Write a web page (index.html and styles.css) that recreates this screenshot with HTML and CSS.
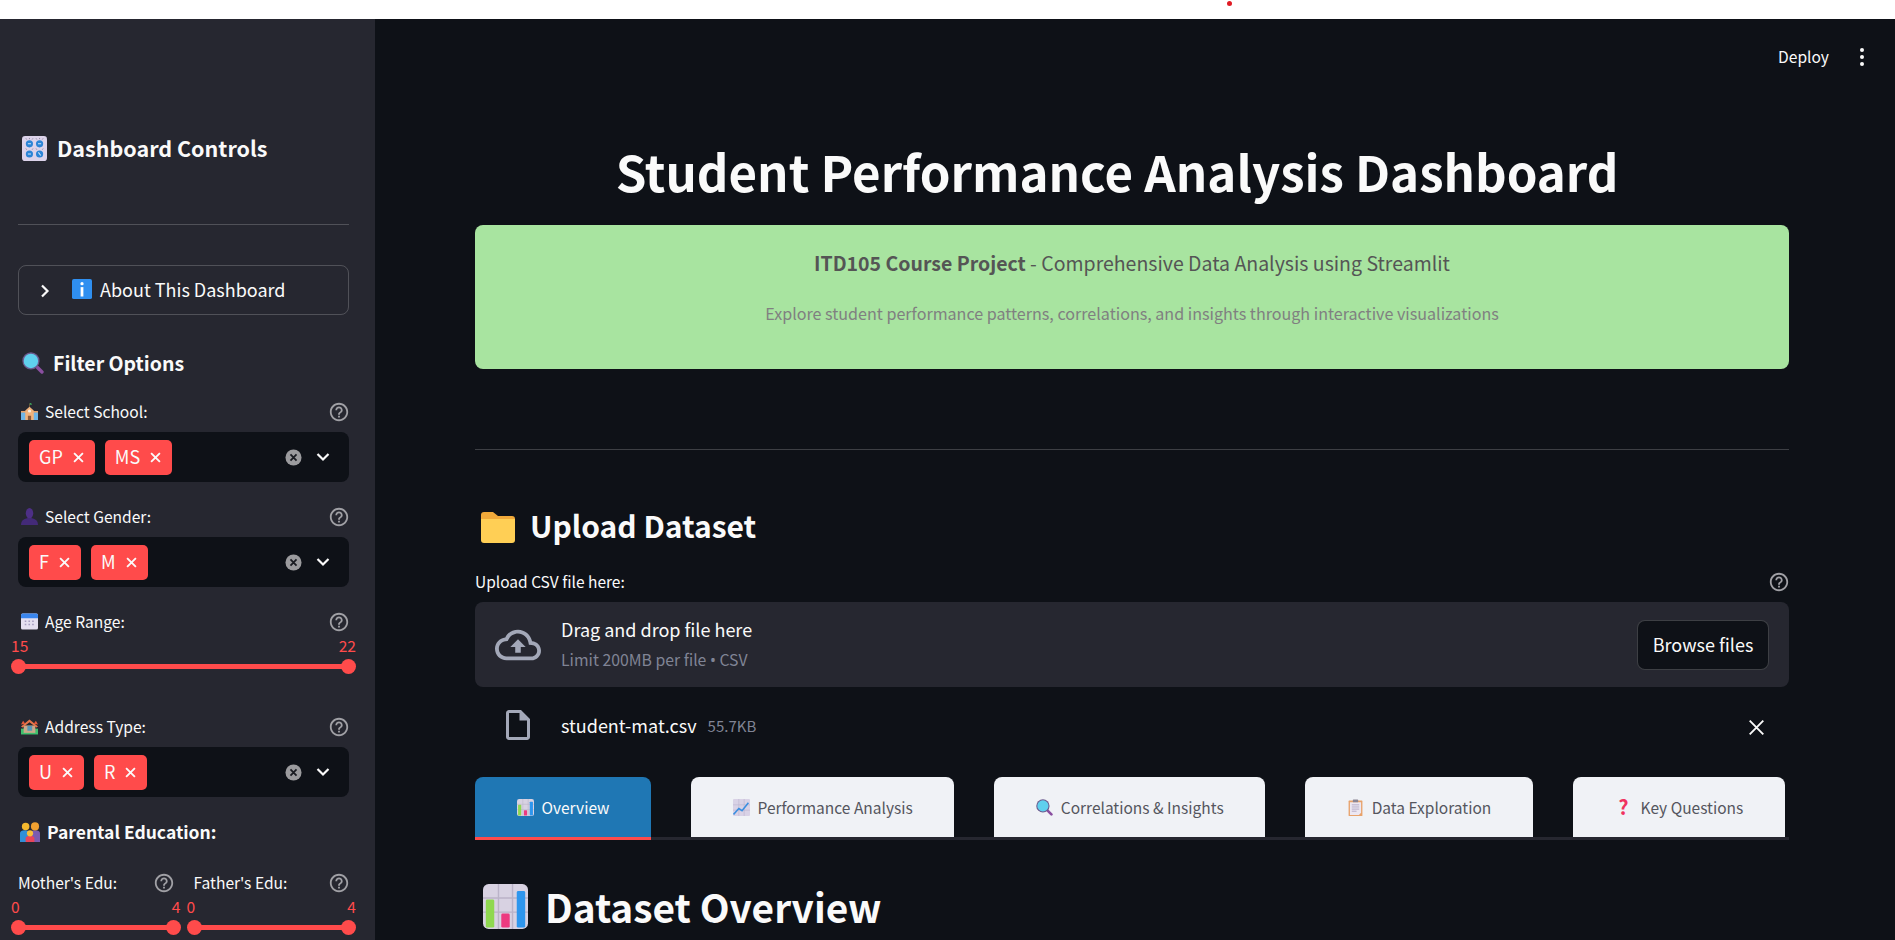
FILE: index.html
```html
<!DOCTYPE html>
<html lang="en">
<head>
  <meta charset="UTF-8">
  <title>Student Performance Analysis Dashboard</title>
  <link rel="stylesheet" href="styles.css">
</head>
<body>

  <!-- emoji and icon set, used through <use> below -->
  <svg class="defs" width="0" height="0">
    <symbol id="e-knobs" viewBox="0 0 32 32">
      <rect x="0" y="0" width="32" height="32" rx="4" fill="#dcd3ea"/>
      <circle cx="9.500" cy="10" r="4.600" fill="#2b84d6"/><circle cx="22.500" cy="10" r="4.600" fill="#2b84d6"/>
      <circle cx="9.500" cy="23" r="4.600" fill="#2b84d6"/><circle cx="22.500" cy="23" r="4.600" fill="#2b84d6"/>
      <path d="M7.500 10h4M20.500 10h4M7.500 23h4M21 21l3 4" stroke="#cfe4f7" stroke-width="1.400"/>
      <path d="M5 3l1 1.500M9.500 2.500v1.500M14 3l-1 1.500M18 3l1 1.500M22.500 2.500v1.500M27 3l-1 1.500M5 16l1 1.500M14 16l-1 1.500M18 16l1 1.500M27 16l-1 1.500" stroke="#7c7592" stroke-width="1"/>
    </symbol>
    <symbol id="e-info" viewBox="0 0 32 32">
      <rect x="0" y="0" width="32" height="32" rx="3" fill="#2f8ff0"/>
      <circle cx="16" cy="7.500" r="2.600" fill="#fff"/>
      <rect x="13.800" y="13" width="4.400" height="15" fill="#fff"/>
    </symbol>
    <symbol id="e-glass" viewBox="0 0 32 32">
      <path d="M20 20l9 9" stroke="#8a4fa0" stroke-width="5" stroke-linecap="round"/>
      <circle cx="13" cy="13" r="12.500" fill="#6b5a8e"/>
      <circle cx="13" cy="13" r="10.500" fill="#5fd0ee"/>
    </symbol>
    <symbol id="e-school" viewBox="0 0 32 32">
      <path d="M16 1v7" stroke="#7a5a3a" stroke-width="1.500"/>
      <path d="M16.500 0c3 0 4 1 4 3.500h-4z" fill="#3fa45a"/>
      <rect x="0" y="17" width="32" height="15" fill="#6fb6e8"/>
      <rect x="0" y="15" width="32" height="3" fill="#e8a36a"/>
      <path d="M8 32V14l8-7 8 7v18z" fill="#f0b27c"/>
      <circle cx="16" cy="15" r="3" fill="#f5efe6"/>
      <rect x="13" y="24" width="6" height="8" fill="#8a5a3c"/>
    </symbol>
    <symbol id="e-bust" viewBox="0 0 32 32">
      <ellipse cx="16" cy="10" rx="7" ry="10" fill="#4d2f86"/>
      <path d="M0 32c0-9 7-13 16-13s16 4 16 13z" fill="#432a78"/>
    </symbol>
    <symbol id="e-calendar" viewBox="0 0 32 32">
      <rect x="0" y="1" width="32" height="30" rx="3" fill="#e4dff0"/>
      <path d="M0 10V4a3 3 0 013-3h26a3 3 0 013 3v6z" fill="#3a86ee"/>
      <path d="M7 14h3v3H7zM14 14h3v3h-3zM21 14h3v3h-3zM7 20h3v3H7zM14 20h3v3h-3zM21 20h3v3h-3z" fill="#a59cc0"/>
    </symbol>
    <symbol id="e-house" viewBox="0 0 32 32">
      <rect x="0" y="20" width="32" height="11" fill="#3fc06e"/>
      <path d="M5 28V14h22v14z" fill="#c9a98a"/>
      <path d="M0 16L16 3l16 13-3 2L16 8 3 18z" fill="#e8764a"/>
      <path d="M0 12l4-7 4 6zM32 12l-4-7-4 6z" fill="#e65a3c"/>
      <rect x="12" y="15" width="9" height="9" fill="#5a97b5"/>
    </symbol>
    <symbol id="e-family" viewBox="0 0 32 32">
      <path d="M0 32V18c0-3 3-5 8-5s7 2 7 5v14z" fill="#2f8fd8"/>
      <path d="M16 32V18c0-3 3-5 8-5s8 2 8 5v14z" fill="#7a5bb0"/>
      <circle cx="9" cy="7" r="6" fill="#f5b92e"/>
      <circle cx="24" cy="7" r="6.500" fill="#f0a030"/>
      <path d="M9 32v-6c0-2 3-4 7-4s7 2 7 4v6z" fill="#e8455a"/>
      <circle cx="16" cy="18" r="5" fill="#f7bd3a"/>
    </symbol>
    <symbol id="e-folder" viewBox="0 0 36 33">
      <path d="M1 5a3 3 0 013-3h9l5 4h14a3 3 0 013 3v6H1z" fill="#f0a93a"/>
      <path d="M1 9h34v21a3 3 0 01-3 3H4a3 3 0 01-3-3z" fill="#ffcf55"/>
    </symbol>
    <symbol id="e-bars" viewBox="0 0 32 32">
      <rect x="0" y="0" width="32" height="32" rx="4" fill="#d8d2e2"/>
      <path d="M0 10h32M0 20h32M11 0v32M21 0v32" stroke="#bab3c8" stroke-width="1"/>
      <rect x="2" y="11" width="6" height="20" rx="1" fill="#8fd850"/>
      <rect x="13" y="21" width="6" height="10" rx="1" fill="#ec3a80"/>
      <rect x="24" y="5" width="6" height="26" rx="1" fill="#2e96ee"/>
    </symbol>
    <symbol id="e-trend" viewBox="0 0 32 32">
      <rect x="0" y="0" width="32" height="32" rx="2" fill="#d9d2e6"/>
      <path d="M0 11h32M0 21h32M11 0v32M21 0v32" stroke="#b8b0ca" stroke-width="1"/>
      <path d="M1 29l10-11 6 4 12-15" fill="none" stroke="#3c8fe0" stroke-width="3"/>
    </symbol>
    <symbol id="e-clip" viewBox="0 0 28 32">
      <rect x="1" y="3" width="26" height="29" rx="1" fill="#e8a26a"/>
      <path d="M3.500 6h21v20l-4 4h-17z" fill="#ece7f2"/>
      <rect x="9" y="1" width="10" height="5" rx="1" fill="#8a8594"/>
      <path d="M7 11h14M7 15h14M7 19h14M7 23h9" stroke="#a9a0be" stroke-width="1.500"/>
    </symbol>
    <symbol id="i-help" viewBox="0 0 24 24">
      <path d="M11 18h2v-2h-2v2zm1-16C6.480 2 2 6.480 2 12s4.480 10 10 10 10-4.480 10-10S17.520 2 12 2zm0 18c-4.410 0-8-3.590-8-8s3.590-8 8-8 8 3.590 8 8-3.590 8-8 8zm0-14c-2.210 0-4 1.790-4 4h2c0-1.100.9-2 2-2s2 .9 2 2c0 2-3 1.750-3 5h2c0-2.250 3-2.500 3-5 0-2.210-1.790-4-4-4z"/>
    </symbol>
    <symbol id="i-x" viewBox="0 0 10 10">
      <path d="M1 1l8 8M9 1l-8 8" fill="none" stroke="currentColor"/>
    </symbol>
    <symbol id="i-clear" viewBox="0 0 18 18">
      <circle cx="9" cy="9" r="8.500" fill="#9b9b9e"/>
      <path d="M5.800 5.800l6.400 6.400M12.200 5.800l-6.400 6.400" stroke="#1a1c22" stroke-width="1.900"/>
    </symbol>
    <symbol id="i-down" viewBox="0 0 14 10">
      <path d="M1.500 2l5.500 5.500L12.500 2" fill="none" stroke="#fafafa" stroke-width="2.200"/>
    </symbol>
  </svg>

  <div class="browser-strip"><span class="red-dot"></span></div>

  <div class="app">
    <aside class="sidebar">
      <h3 class="side-title"><svg class="emo emo-25"><use href="#e-knobs"/></svg>Dashboard Controls</h3>
      <hr class="side-rule">

      <div class="expander">
        <svg class="exp-arrow" viewBox="0 0 10 14"><path d="M2 1.500L7.500 7 2 12.500" fill="none" stroke="#fafafa" stroke-width="2.200"/></svg>
        <svg class="emo emo-20"><use href="#e-info"/></svg>
        <span>About This Dashboard</span>
      </div>

      <h4 class="filter-title"><svg class="emo emo-22"><use href="#e-glass"/></svg>Filter Options</h4>

      <div class="label-row first">
        <span class="label"><svg class="emo emo-17"><use href="#e-school"/></svg>Select School:</span>
        <svg class="help"><use href="#i-help"/></svg>
      </div>
      <div class="multi">
        <span class="tag">GP<svg class="tag-x"><use href="#i-x"/></svg></span>
        <span class="tag">MS<svg class="tag-x"><use href="#i-x"/></svg></span>
        <svg class="clear"><use href="#i-clear"/></svg>
        <svg class="down"><use href="#i-down"/></svg>
      </div>

      <div class="label-row">
        <span class="label"><svg class="emo emo-17"><use href="#e-bust"/></svg>Select Gender:</span>
        <svg class="help"><use href="#i-help"/></svg>
      </div>
      <div class="multi">
        <span class="tag">F<svg class="tag-x"><use href="#i-x"/></svg></span>
        <span class="tag">M<svg class="tag-x"><use href="#i-x"/></svg></span>
        <svg class="clear"><use href="#i-clear"/></svg>
        <svg class="down"><use href="#i-down"/></svg>
      </div>

      <div class="label-row">
        <span class="label"><svg class="emo emo-17"><use href="#e-calendar"/></svg>Age Range:</span>
        <svg class="help"><use href="#i-help"/></svg>
      </div>
      <div class="range-values"><span>15</span><span>22</span></div>
      <div class="range"><i></i><i></i></div>

      <div class="label-row after-range">
        <span class="label"><svg class="emo emo-17"><use href="#e-house"/></svg>Address Type:</span>
        <svg class="help"><use href="#i-help"/></svg>
      </div>
      <div class="multi">
        <span class="tag">U<svg class="tag-x"><use href="#i-x"/></svg></span>
        <span class="tag">R<svg class="tag-x"><use href="#i-x"/></svg></span>
        <svg class="clear"><use href="#i-clear"/></svg>
        <svg class="down"><use href="#i-down"/></svg>
      </div>

      <h5 class="parent-title"><svg class="emo emo-20"><use href="#e-family"/></svg>Parental Education:</h5>

      <div class="edu-grid">
        <div>
          <div class="label-row tight">
            <span class="label">Mother's Edu:</span>
            <svg class="help"><use href="#i-help"/></svg>
          </div>
          <div class="range-values"><span>0</span><span>4</span></div>
          <div class="range"><i></i><i></i></div>
        </div>
        <div>
          <div class="label-row tight">
            <span class="label">Father's Edu:</span>
            <svg class="help"><use href="#i-help"/></svg>
          </div>
          <div class="range-values"><span>0</span><span>4</span></div>
          <div class="range"><i></i><i></i></div>
        </div>
      </div>
    </aside>

    <main class="main">
      <div class="topbar">
        <span class="deploy">Deploy</span>
        <span class="dots"><i></i><i></i><i></i></span>
      </div>

      <div class="content">
        <h1 class="page-title">Student Performance Analysis Dashboard</h1>

        <div class="banner">
          <p class="banner-main"><b>ITD105 Course Project</b> - Comprehensive Data Analysis using Streamlit</p>
          <p class="banner-sub">Explore student performance patterns, correlations, and insights through interactive visualizations</p>
        </div>

        <hr class="main-rule">

        <h2 class="section-title"><svg class="emo emo-36"><use href="#e-folder"/></svg>Upload Dataset</h2>

        <div class="upload-label">
          <span>Upload CSV file here:</span>
          <svg class="help"><use href="#i-help"/></svg>
        </div>

        <div class="dropzone">
          <svg class="cloud" viewBox="0 0 24 24"><path d="M19.350 10.040C18.670 6.590 15.640 4 12 4 9.110 4 6.600 5.640 5.350 8.040 2.340 8.360 0 10.910 0 14c0 3.310 2.690 6 6 6h13c2.760 0 5-2.240 5-5 0-2.640-2.050-4.780-4.650-4.960zM19 18H6c-2.210 0-4-1.790-4-4 0-2.050 1.530-3.760 3.560-3.970l1.070-.11.5-.95C8.080 7.140 9.940 6 12 6c2.620 0 4.880 1.860 5.390 4.430l.3 1.500 1.530.11c1.560.1 2.780 1.410 2.780 2.960 0 1.650-1.350 3-3 3zM8 13h2.550v3h2.900v-3H16l-4-4z"/></svg>
          <div class="drop-text">
            <span class="drop-main">Drag and drop file here</span>
            <span class="drop-sub">Limit 200MB per file <span class="sep">•</span> CSV</span>
          </div>
          <button class="browse">Browse files</button>
        </div>

        <div class="file-row">
          <svg class="file-icon" viewBox="0 0 24 24"><path d="M14 2H6c-1.100 0-1.990.9-1.990 2L4 20c0 1.100.89 2 1.990 2H18c1.100 0 2-.9 2-2V8l-6-6zM6 20V4h7v5h5v11H6z"/></svg>
          <span class="file-name">student-mat.csv</span>
          <span class="file-size">55.7KB</span>
          <svg class="file-x"><use href="#i-x"/></svg>
        </div>

        <div class="tabs">
          <div class="tab active"><svg class="emo emo-17"><use href="#e-bars"/></svg>Overview</div>
          <div class="tab"><svg class="emo emo-17"><use href="#e-trend"/></svg>Performance Analysis</div>
          <div class="tab"><svg class="emo emo-17"><use href="#e-glass"/></svg>Correlations &amp; Insights</div>
          <div class="tab"><svg class="emo emo-17"><use href="#e-clip"/></svg>Data Exploration</div>
          <div class="tab"><span class="qmark">?</span>Key Questions</div>
        </div>

        <h2 class="overview-title"><svg class="emo emo-45"><use href="#e-bars"/></svg>Dataset Overview</h2>
      </div>
    </main>
  </div>

</body>
</html>
```

FILE: styles.css
```css
* {
  box-sizing: border-box;
}

body {
  margin: 0;
  height: 940px;
  overflow: hidden;
  background-color: #fff;
  color: #fafafa;
  font-family: "Noto Sans CJK SC", "Noto Sans", sans-serif;
  display: flex;
  flex-direction: column;
}

h1, h2, h3, h4, h5, p {
  margin: 0;
}

.defs {
  position: absolute;
}

.browser-strip {
  position: relative;
  height: 19px;
  flex: none;
  background-color: #fff;
}

.red-dot {
  position: absolute;
  left: 1227px;
  top: 1px;
  width: 5px;
  height: 5px;
  border-radius: 50%;
  background-color: #e01b24;
}

.app {
  flex: 1;
  display: flex;
  min-height: 0;
}

/* emoji sizes */
.emo { flex: none; }
.emo-17 { width: 17px; height: 17px; }
.emo-20 { width: 20px; height: 20px; }
.emo-22 { width: 22px; height: 22px; }
.emo-25 { width: 25px; height: 25px; }
.emo-36 { width: 36px; height: 33px; }
.emo-45 { width: 45px; height: 45px; }

/* sidebar */
.sidebar {
  width: 375px;
  flex: none;
  background-color: #262730;
  padding: 111px 26px 0 18px;
  overflow: hidden;
}

.side-title {
  display: flex;
  align-items: center;
  gap: 10px;
  padding-left: 4px;
  font-size: 21.5px;
  font-weight: 600;
  line-height: 36px;
}

.side-rule {
  margin: 58px 0 0;
  border: none;
  height: 1px;
  background-color: rgba(250, 250, 250, 0.2);
}

.expander {
  margin-top: 40px;
  height: 50px;
  display: flex;
  align-items: center;
  padding: 0 0 3px 21px;
  border: 1px solid rgba(250, 250, 250, 0.2);
  border-radius: 8px;
  font-size: 18px;
}

.exp-arrow {
  width: 10px;
  height: 14px;
  margin: 4px 22px 0 0;
}

.expander .emo {
  margin-right: 8px;
}

.filter-title {
  margin-top: 33px;
  display: flex;
  align-items: center;
  gap: 9px;
  padding-left: 4px;
  font-size: 19.5px;
  font-weight: 600;
  line-height: 30px;
}

.label-row {
  margin-top: 25px;
  height: 20px;
  display: flex;
  align-items: center;
  justify-content: space-between;
}

.label-row.first { margin-top: 24px; }
.label-row.after-range { margin-top: 43px; }
.label-row.tight { margin-top: 0; }

.label {
  display: flex;
  align-items: center;
  gap: 7px;
  padding: 0 0 2px 3px;
  font-size: 15.6px;
  line-height: 20px;
}

.tight .label {
  padding-left: 0;
}

.help {
  width: 22px;
  height: 22px;
  margin-right: -1px;
  fill: #a0a0a5;
}

.multi {
  margin-top: 10px;
  height: 50px;
  display: flex;
  align-items: center;
  gap: 10px;
  padding: 0 19px 0 11px;
  background-color: #0e1117;
  border-radius: 8px;
}

.tag {
  height: 35px;
  display: flex;
  align-items: center;
  gap: 10px;
  padding: 0 11px 2px 10px;
  background-color: #ff4b4b;
  border-radius: 5px;
  font-size: 18px;
  line-height: 33px;
}

.tag-x {
  width: 11px;
  height: 11px;
  margin-top: 2px;
  stroke-width: 1.7;
}

.clear {
  width: 17px;
  height: 17px;
  margin-left: auto;
  margin-right: 4px;
}

.down {
  width: 14px;
  height: 10px;
}

.range-values {
  margin: 3px -7px 0;
  height: 20px;
  display: flex;
  justify-content: space-between;
  color: #ff4b4b;
  font-size: 15.6px;
  line-height: 20px;
}

.range {
  position: relative;
  margin: 4px -7px 0;
  height: 15px;
  display: flex;
  justify-content: space-between;
}

.range::before {
  content: "";
  position: absolute;
  left: 7px;
  right: 7px;
  top: 5px;
  height: 5px;
  background-color: #ff4b4b;
}

.range i {
  position: relative;
  width: 15px;
  height: 15px;
  border-radius: 50%;
  background-color: #ff4b4b;
}

.parent-title {
  margin-top: 22px;
  display: flex;
  align-items: center;
  gap: 7px;
  padding-left: 2px;
  font-size: 17.5px;
  font-weight: 600;
  line-height: 26px;
}

.edu-grid {
  margin-top: 28px;
  display: grid;
  grid-template-columns: 1fr 1fr;
  gap: 20px;
}

/* main area */
.main {
  flex: 1;
  min-width: 0;
  background-color: #0e1117;
}

.topbar {
  height: 76px;
  display: flex;
  align-items: center;
  justify-content: flex-end;
  padding-right: 31px;
  gap: 31px;
  font-size: 15.6px;
}

.deploy {
  padding-bottom: 2px;
}

.dots {
  display: flex;
  flex-direction: column;
  gap: 3px;
}

.dots i {
  width: 4px;
  height: 4px;
  border-radius: 50%;
  background-color: #fafafa;
}

.content {
  padding: 0 106px 0 100px;
}

.page-title {
  margin-top: 46px;
  padding-right: 30px;
  text-align: center;
  font-size: 49.2px;
  font-weight: 700;
  line-height: 60px;
}

.banner {
  margin-top: 24px;
  height: 144px;
  padding-top: 23px;
  background-color: #a8e4a0;
  border-radius: 8px;
  text-align: center;
}

.banner-main {
  color: #555;
  font-size: 19.5px;
  line-height: 30px;
}

.banner-main b {
  font-weight: 600;
}

.banner-sub {
  margin-top: 23px;
  color: #808080;
  font-size: 16.1px;
  line-height: 24px;
}

.main-rule {
  margin: 80px 0 0;
  border: none;
  height: 1px;
  background-color: rgba(250, 250, 250, 0.2);
}

.section-title {
  margin-top: 50px;
  display: flex;
  align-items: center;
  gap: 14px;
  padding-left: 5px;
  font-size: 30px;
  font-weight: 600;
  line-height: 50px;
}

.section-title .emo {
  margin-top: 2px;
}

.upload-label {
  margin-top: 22px;
  height: 20px;
  display: flex;
  align-items: center;
  justify-content: space-between;
  font-size: 15.5px;
  line-height: 20px;
}

.upload-label span {
  padding-bottom: 2px;
}

.dropzone {
  margin-top: 10px;
  height: 85px;
  display: flex;
  align-items: center;
  padding: 0 20px;
  background-color: #262730;
  border-radius: 8px;
}

.cloud {
  width: 46px;
  height: 46px;
  margin-right: 20px;
  fill: #a3a8b8;
}

.drop-text {
  flex: 1;
  display: flex;
  flex-direction: column;
  gap: 7px;
}

.drop-main {
  font-size: 18px;
  line-height: 24px;
}

.drop-sub {
  color: #808495;
  font-size: 15.8px;
  line-height: 24px;
}

.sep {
  font-family: "Noto Sans", sans-serif;
}

.browse {
  width: 132px;
  height: 50px;
  padding-bottom: 3px;
  background-color: #0e1117;
  color: #fafafa;
  border: 1px solid rgba(250, 250, 250, 0.2);
  border-radius: 8px;
  font-family: inherit;
  font-size: 18px;
}

.file-row {
  margin-top: 13px;
  height: 50px;
  display: flex;
  align-items: center;
  padding: 0 26px 0 25px;
}

.file-icon {
  width: 36px;
  height: 36px;
  margin-right: 25px;
  fill: #a3a8b8;
}

.file-name {
  font-size: 18px;
}

.file-size {
  margin-left: 11px;
  color: #808495;
  font-size: 15px;
}

.file-x {
  width: 17px;
  height: 17px;
  margin: 4px -2px 0 auto;
  color: #fafafa;
  stroke-width: 1.1;
}

.tabs {
  margin-top: 27px;
  display: flex;
  gap: 40px;
  border-bottom: 3px solid #262730;
}

.tab {
  flex: none;
  height: 60px;
  display: flex;
  align-items: center;
  gap: 8px;
  padding: 0 41.5px;
  background-color: #f0f2f6;
  color: #55565e;
  border-radius: 8px 8px 0 0;
  font-size: 15.5px;
  white-space: nowrap;
}

.tab.active {
  position: relative;
  background-color: #1f77b4;
  color: #fafafa;
}

.tab.active::after {
  content: "";
  position: absolute;
  left: 0;
  right: 0;
  bottom: -3px;
  height: 3px;
  background-color: #ff4b4b;
}

.qmark {
  color: #f0325f;
  font-size: 20px;
  font-weight: 700;
  line-height: 1;
  padding: 0 4px;
}

.overview-title {
  margin-top: 36px;
  display: flex;
  align-items: center;
  gap: 17px;
  padding-left: 8px;
  font-size: 38.8px;
  font-weight: 600;
  line-height: 60px;
}
```
